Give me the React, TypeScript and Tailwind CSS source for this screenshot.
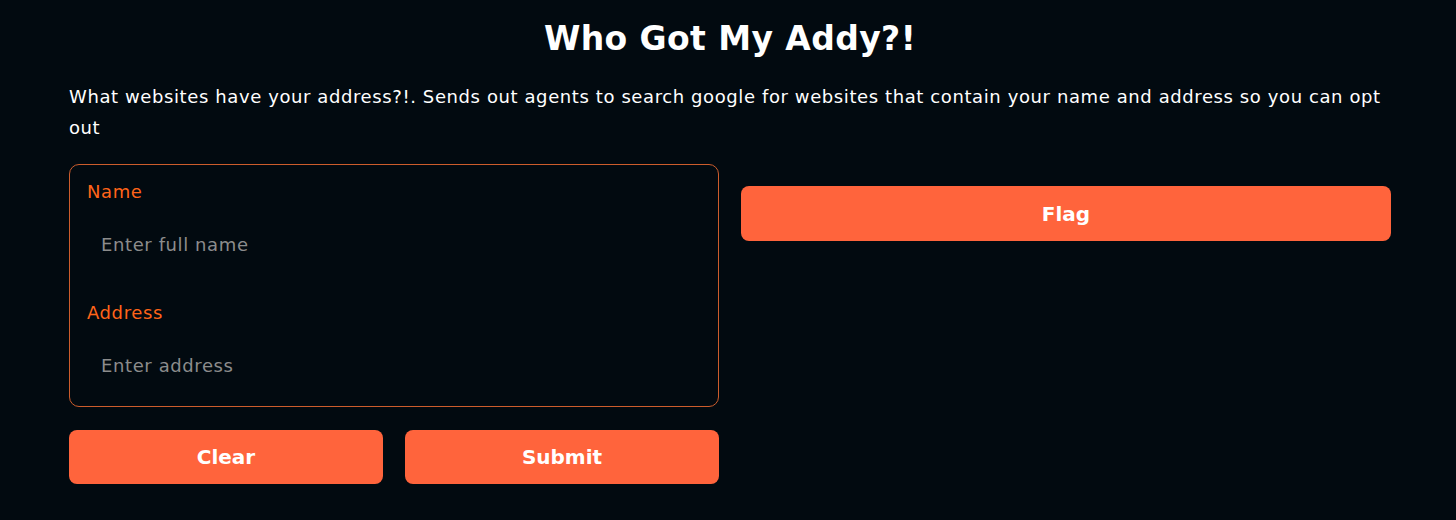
import React, { useState } from "react";

const font = { fontFamily: '"DejaVu Sans", "Noto Sans", sans-serif' };

export default function App() {
  const [name, setName] = useState("");
  const [address, setAddress] = useState("");

  return (
    <div
      className="min-h-[520px] w-full bg-[#020a10] text-white pl-[69px] pr-[65px] pt-[19px]"
      style={font}
    >
      <h1 className="text-center text-[33px] leading-[40px] font-bold tracking-[0.4px]">
        Who Got My Addy?!
      </h1>

      <p className="mt-[22px] text-[18px] leading-[31px] text-white tracking-[0.6px]">
        What websites have your address?!. Sends out agents to search google for websites that
        contain your name and address so you can opt out
      </p>

      <div className="mt-[21px] grid grid-cols-2 gap-[22px]">
        {/* Left: form */}
        <div className="flex flex-col">
          <div className="rounded-[10px] border border-[#cc5c2c] px-[17px] pt-[15px] pb-[17px]">
            <label className="block text-[18px] leading-[24px] tracking-[0.6px] text-[#ff6419]">
              Name
            </label>
            <input
              value={name}
              onChange={(e) => setName(e.target.value)}
              placeholder="Enter full name"
              className="mt-[16px] block h-[48px] w-full bg-transparent px-[14px] text-[18px] tracking-[0.6px] text-white placeholder:text-[#8c8c8c] outline-none"
            />
            <label className="mt-[33px] block text-[18px] leading-[24px] tracking-[0.6px] text-[#ff6419]">
              Address
            </label>
            <input
              value={address}
              onChange={(e) => setAddress(e.target.value)}
              placeholder="Enter address"
              className="mt-[16px] block h-[48px] w-full bg-transparent px-[14px] text-[18px] tracking-[0.6px] text-white placeholder:text-[#8c8c8c] outline-none"
            />
          </div>

          <div className="mt-[23px] grid grid-cols-2 gap-[22px]">
            <button
              onClick={() => {
                setName("");
                setAddress("");
              }}
              className="h-[54px] rounded-[8px] bg-[#ff643c] text-[20px] font-bold text-white"
            >
              Clear
            </button>
            <button className="h-[54px] rounded-[8px] bg-[#ff643c] text-[20px] font-bold text-white">
              Submit
            </button>
          </div>
        </div>

        {/* Right: output */}
        <div className="pt-[22px]">
          <button className="h-[55px] w-full rounded-[8px] bg-[#ff643c] text-[20px] font-bold text-white">
            Flag
          </button>
        </div>
      </div>
    </div>
  );
}
